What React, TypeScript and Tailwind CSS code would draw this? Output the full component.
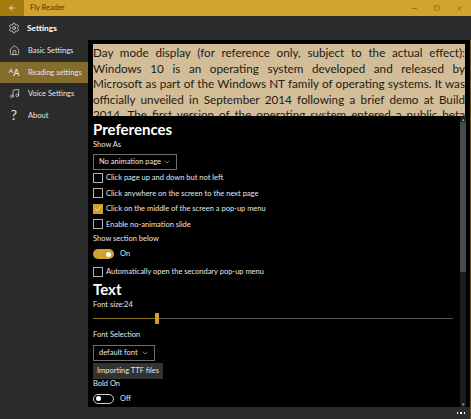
import { ArrowLeft, ChevronDown, Check, Home, Settings, Music, Minus, Square, X } from "lucide-react";

const navItems = [
  { label: "Basic Settings", icon: <Home className="h-[11px] w-[11px]" strokeWidth={1.5} /> },
  {
    label: "Reading settings",
    active: true,
    icon: (
      <span className="flex items-end font-semibold leading-none">
        <span className="mb-[2px] text-[6.5px]">A</span>
        <span className="text-[9px]">A</span>
      </span>
    ),
  },
  { label: "Voice Settings", icon: <Music className="h-[11px] w-[11px]" strokeWidth={1.5} /> },
  { label: "About", icon: <span className="text-[14px] leading-none">?</span> },
];

const paperLines = [
  "Day mode display (for reference only, subject to the actual effect):",
  "Windows 10 is an operating system developed and released by",
  "Microsoft as part of the Windows NT family of operating systems. It was",
  "officially unveiled in September 2014 following a brief demo at Build",
  "2014. The first version of the operating system entered a public beta",
];

function CheckRow({ label, checked }: { label: string; checked?: boolean }) {
  return (
    <div className="flex h-[15.5px] items-center gap-[3px]">
      <span
        className={
          checked
            ? "flex h-[10px] w-[10px] items-center justify-center bg-[#d2a12b] text-white"
            : "h-[10px] w-[10px] border border-[#b5b5b5]"
        }
      >
        {checked && <Check className="h-[8px] w-[8px]" strokeWidth={2} />}
      </span>
      <span>{label}</span>
    </div>
  );
}

function Toggle({ on }: { on?: boolean }) {
  return (
    <div className="flex h-[14px] items-center gap-[6px]">
      <span
        className={
          on
            ? "flex h-[10px] w-[21px] items-center justify-end rounded-full bg-[#d2a12b] px-[3px]"
            : "flex h-[10px] w-[21px] items-center rounded-full border border-[#d0d0d0] px-[2px]"
        }
      >
        <span className="h-[5px] w-[5px] rounded-full bg-white" />
      </span>
      <span>{on ? "On" : "Off"}</span>
    </div>
  );
}

function Dropdown({ label, width }: { label: string; width: string }) {
  return (
    <div className={`flex h-[16px] items-center justify-between border border-[#6e6e6e] pl-[5px] pr-[5px] ${width}`}>
      <span className="whitespace-nowrap">{label}</span>
      <ChevronDown className="h-[8px] w-[8px]" strokeWidth={1.5} />
    </div>
  );
}

export default function App() {
  return (
    <div className="flex h-[419px] w-[471px] flex-col overflow-hidden bg-[#2b2b2b] font-['Lato','Noto_Sans',sans-serif] text-[7.5px] text-[#e6e6e6]">
      <div className="flex h-[16px] shrink-0 items-center bg-[#d0a42e] text-[#4a3a10]">
        <div className="flex h-full w-[24px] items-center justify-center bg-[#a67c10] text-white">
          <ArrowLeft className="h-[8px] w-[8px]" strokeWidth={2} />
        </div>
        <span className="ml-[6px] text-[7.5px]">Fly Reader</span>
        <div className="ml-auto flex items-center gap-[16px] pr-[8px] text-[#3a3010]">
          <Minus className="h-[7px] w-[7px]" strokeWidth={1.5} />
          <Square className="h-[6px] w-[6px]" strokeWidth={1.5} />
          <X className="h-[7px] w-[7px]" strokeWidth={1.5} />
        </div>
      </div>

      <div className="flex min-h-0 flex-1">
        <aside className="flex w-[88px] shrink-0 flex-col">
          <div className="flex h-[24px] items-center font-bold text-white">
            <span className="flex w-[27px] justify-center"><Settings className="h-[12px] w-[12px]" strokeWidth={1.25} /></span>
            <span className="text-[8.4px]">Settings</span>
          </div>
          {navItems.map((item) => (
            <div
              key={item.label}
              className={item.active ? "flex h-[21.5px] items-center bg-[#846c2c]" : "flex h-[21.5px] items-center"}
            >
              <span className="flex w-[28px] justify-center">{item.icon}</span>
              <span className="whitespace-nowrap">{item.label}</span>
            </div>
          ))}
        </aside>

        <main className="flex min-w-0 flex-1 flex-col">
          <div className="h-[24px] shrink-0" />
          <div className="flex min-h-0 flex-1 flex-col border-r border-r-[#6d5a22] bg-black">
            <div className="mx-[5px] mt-[4px] h-[72px] shrink-0 overflow-hidden bg-[#d3bd98] pt-[1px] text-[11.7px] leading-[15.6px] text-[#1d1a14]">
              {paperLines.map((line) => (
                <div key={line} className="text-justify [text-align-last:justify]">
                  {line}
                </div>
              ))}
            </div>

            <div className="flex min-h-0 flex-1">
              <div className="min-w-0 flex-1 pl-[5px]">
                <h1 className="mt-[3px] text-[15px] font-bold leading-[20px] text-white">Preferences</h1>
                <div className="leading-[12px]">Show As</div>
                <div className="mt-[3px]"><Dropdown label="No animation page" width="w-[84px]" /></div>
                <div>
                  <CheckRow label="Click page up and down but not left" />
                  <CheckRow label="Click anywhere on the screen to the next page" />
                  <CheckRow label="Click on the middle of the screen a pop-up menu" checked />
                  <CheckRow label="Enable no-animation slide" />
                </div>
                <div className="mt-[1px] leading-[12px]">Show section below</div>
                <div className="mt-[2px]"><Toggle on /></div>
                <div className="mt-[3px]"><CheckRow label="Automatically open the secondary pop-up menu" /></div>
                <h2 className="mt-[-1px] text-[15px] font-bold leading-[20px] text-white">Text</h2>
                <div className="leading-[12px]">Font size:24</div>
                <div className="mt-[2px] flex h-[12px] w-[360px] items-center">
                  <div className="h-[1.5px] w-[62px] bg-[#8a7020]" />
                  <div className="h-[11px] w-[4px] rounded-[1px] bg-[#d2a12b]" />
                  <div className="h-[1.5px] flex-1 bg-[#555555]" />
                </div>
                <div className="mt-[4px] leading-[12px]">Font Selection</div>
                <div className="mt-[4px]"><Dropdown label="default font" width="w-[62px]" /></div>
                <div className="mt-[2px] flex h-[16px] w-[70px] items-center justify-center whitespace-nowrap bg-[#333333]">Importing TTF files</div>
                <div className="mt-[-1px] leading-[12px]">Bold On</div>
                <div className="mt-[2px]"><Toggle /></div>
              </div>
              <div className="flex w-[6px] shrink-0 flex-col bg-[#1c1c1c] text-[5px] leading-[6px] text-[#a0a0a0]">
                <span className="text-center">▴</span>
                <span className="h-[150px] w-full bg-[#4a4a4a]" />
                <span className="mt-auto text-center">▾</span>
              </div>
              <div className="w-[4px] shrink-0" />
            </div>

            <div className="flex h-[12px] shrink-0 items-center justify-end bg-[#2b2b2b] pr-[5px]">
              <span className="flex gap-[2px]">
                <span className="h-[1.5px] w-[1.5px] bg-white" />
                <span className="h-[1.5px] w-[1.5px] bg-white" />
                <span className="h-[1.5px] w-[1.5px] bg-white" />
              </span>
            </div>
          </div>
        </main>
      </div>
    </div>
  );
}
